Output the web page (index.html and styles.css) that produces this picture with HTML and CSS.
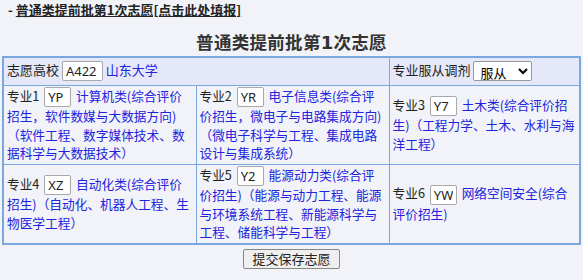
FILE: index.html
```html
<!DOCTYPE html>
<html lang="zh-CN">
<head>
    <meta charset="UTF-8">
    <title>普通类提前批第1次志愿</title>
    <link rel="stylesheet" href="styles.css">
</head>
<body>
    <div class="toplink">- <a href="#">普通类提前批第1次志愿[点击此处填报]</a></div>

    <h2 class="title">普通类提前批第<b>1</b>次志愿</h2>

    <table class="zy">
        <colgroup>
            <col class="c1">
            <col class="c2">
            <col class="c3">
        </colgroup>
        <tr class="head">
            <td colspan="2">志愿高校 <input class="code wide" value="A422"> <span class="blue">山东大学</span></td>
            <td>专业服从调剂 <select class="sel"><option>服从</option></select></td>
        </tr>
        <tr>
            <td>专业1 <input class="code" value="YP"> <span class="blue">计算机类(综合评价招生，软件数媒与大数据方向)（软件工程、数字媒体技术、数据科学与大数据技术）</span></td>
            <td>专业2 <input class="code" value="YR"> <span class="blue">电子信息类(综合评价招生，微电子与电路集成方向)（微电子科学与工程、集成电路设计与集成系统）</span></td>
            <td>专业3 <input class="code" value="Y7"> <span class="blue">土木类(综合评价招生)（工程力学、土木、水利与海洋工程）</span></td>
        </tr>
        <tr>
            <td>专业4 <input class="code" value="XZ"> <span class="blue">自动化类(综合评价招生)（自动化、机器人工程、生物医学工程）</span></td>
            <td>专业5 <input class="code" value="Y2"> <span class="blue">能源动力类(综合评价招生)（能源与动力工程、能源与环境系统工程、新能源科学与工程、储能科学与工程）</span></td>
            <td>专业6 <input class="code" value="YW"> <span class="blue">网络空间安全(综合评价招生)</span></td>
        </tr>
    </table>

    <div class="actions">
        <button type="button">提交保存志愿</button>
    </div>
</body>
</html>
```

FILE: styles.css
```css
* { box-sizing: border-box; }

body {
    margin: 0;
    background-color: #f1f3f8;
    color: #222;
    font-family: "Noto Sans CJK SC", "Noto Sans", sans-serif;
    font-size: 13px;
}

.toplink {
    padding: 1px 0 0 8px;
    height: 22px;
    line-height: 18px;
    font-weight: bold;
}

.toplink a {
    color: #222;
    text-decoration: underline;
}

.title {
    margin: 8px 0 0;
    height: 26px;
    text-align: center;
    font-size: 17.5px;
    line-height: 24px;
    font-weight: bold;
    font-family: "Noto Sans CJK SC", serif;
    letter-spacing: 0.3px;
    color: #333;
}

.title b { font-family: "DejaVu Sans", sans-serif; font-size: 18px; }

.zy {
    width: 577px;
    margin: 0 0 0 2px;
    border-collapse: collapse;
    border: 2px solid #7aa7e0;
    table-layout: fixed;
}

.zy col.c1 { width: 193px; }
.zy col.c2 { width: 193px; }
.zy col.c3 { width: 191px; }

.zy td {
    border: 1px solid #7aa7e0;
    padding: 1px 3px;
    font-size: 12.7px;
    line-height: 18.5px;
    vertical-align: middle;
}

.zy tr.head td {
    background-color: #e5e8f8;
    height: 28px;
    padding: 3px;
    font-size: 13px;
}

.blue { color: #2222dd; }

.code {
    width: 27px;
    height: 20px;
    margin: 0 2px;
    padding: 0 3px;
    border: 1px solid #a8a8a8;
    border-radius: 2px;
    background: #fff;
    color: #222;
    font-family: "Noto Sans", sans-serif;
    font-size: 13px;
    vertical-align: middle;
}

.code.wide { width: 41px; margin: 0; }

.sel {
    width: 59px;
    height: 20px;
    padding: 0 2px;
    border: 1px solid #999;
    border-radius: 2px;
    background: #fff;
    font-family: "Noto Sans CJK SC", sans-serif;
    font-size: 13px;
    vertical-align: middle;
}

.actions {
    text-align: center;
    padding-top: 4px;
}

.actions button {
    height: 20px;
    padding: 0 8px;
    border: 1px solid #888;
    border-radius: 2px;
    background: #efefef;
    color: #222;
    font-family: "Noto Sans CJK SC", sans-serif;
    font-size: 13px;
    line-height: 17px;
}
```
